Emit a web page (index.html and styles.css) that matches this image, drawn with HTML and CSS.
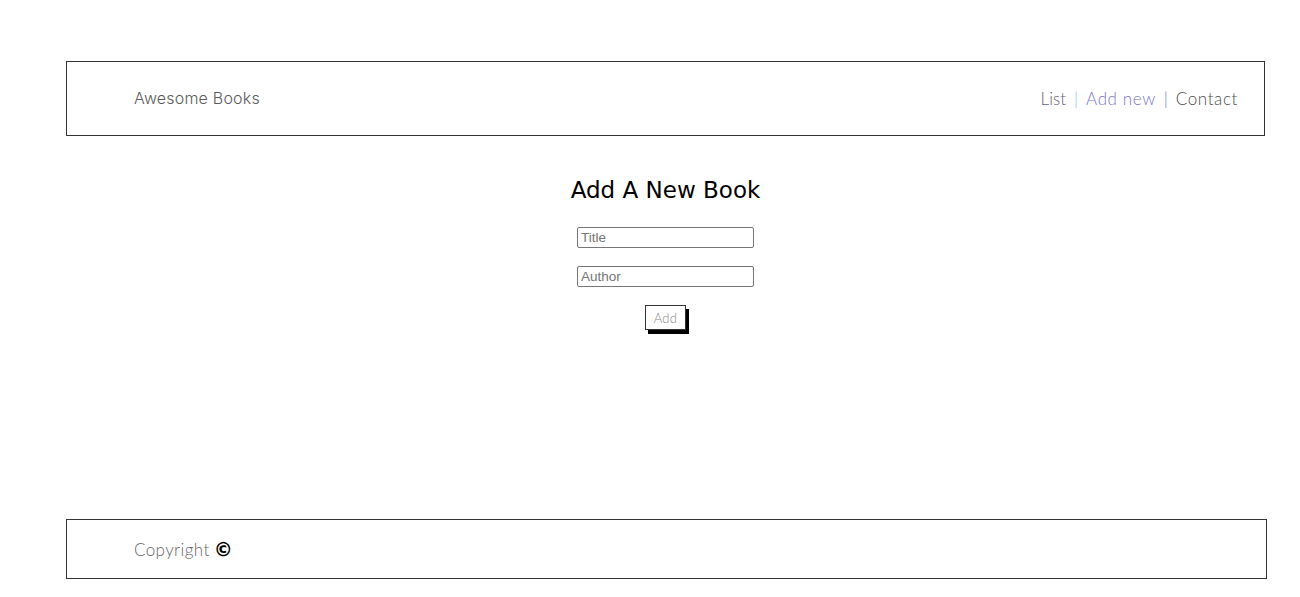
FILE: index.html
```html
<!DOCTYPE html>
<html lang="en">
<head>
<meta charset="utf-8">
<title>Awesome Books</title>
<link rel="stylesheet" href="styles.css">
</head>
<body>
<div class="page">
  <header class="header">
    <span class="brand">Awesome Books</span>
    <nav class="nav">
      <a class="nav-link list" href="#">List</a>
      <span class="sep sep-blue">|</span>
      <a class="nav-link add" href="#">Add new</a>
      <span class="sep sep-purple">|</span>
      <a class="nav-link contact" href="#">Contact</a>
    </nav>
  </header>
  <main class="main">
    <h1 class="title">Add A New Book</h1>
    <form class="form">
      <input class="field" type="text" placeholder="Title">
      <input class="field" type="text" placeholder="Author">
      <button class="add-btn" type="button">Add</button>
    </form>
  </main>
  <footer class="footer">
    <span class="copy">Copyright</span><span class="copy-sign">©</span>
  </footer>
</div>
</body>
</html>
```
FILE: styles.css
```css
html, body {
  margin: 0;
  padding: 0;
  background: #fff;
}

.page {
  padding: 61px 0 0 66px;
  width: 1202px;
  display: flex;
  flex-direction: column;
}

.header {
  box-sizing: border-box;
  width: 1199px;
  height: 75px;
  border: 1px solid #333;
  display: flex;
  align-items: center;
  justify-content: space-between;
  padding: 0 26px 0 67px;
}

.brand {
  font-family: "Inter", "Liberation Sans", sans-serif;
  font-weight: 300;
  font-size: 16px;
  letter-spacing: 0.2px;
  color: #5a5a5a;
  position: relative;
  top: -1px;
}

.nav {
  display: flex;
  align-items: center;
  gap: 8px;
  font-family: "Lato", "Liberation Sans", sans-serif;
  font-weight: 300;
  font-size: 17px;
  letter-spacing: 0.6px;
}

.nav-link {
  text-decoration: none;
}

.list { color: #66607a; letter-spacing: 0; }
.add { color: #7d74c9; }
.contact { color: #4d4d4d; }

.sep {
  font-weight: 300;
  letter-spacing: 0;
}
.sep-blue { color: #8fb8ea; }
.sep-purple { color: #7a70c4; }

.main {
  height: 383px;
  display: flex;
  flex-direction: column;
  align-items: center;
  width: 1199px;
}

.title {
  margin: 38px 0 0;
  font-family: "DejaVu Sans", sans-serif;
  font-weight: 400;
  font-size: 23px;
  color: #000;
  line-height: 32px;
}

.form {
  display: flex;
  flex-direction: column;
  align-items: center;
  margin-top: 21px;
  gap: 18px;
}

.field {
  box-sizing: border-box;
  width: 177px;
  height: 21px;
  margin: 0;
  border: 1px solid #767676;
  border-radius: 2px;
  padding: 1px 3px;
  font-family: "Liberation Sans", Arial, sans-serif;
  font-size: 13.5px;
  color: #333;
}

.field::placeholder {
  color: #757575;
}

.add-btn {
  box-sizing: border-box;
  width: 41px;
  height: 25px;
  margin: 0;
  padding: 0;
  background: #fff;
  border: 1px solid #333;
  box-shadow: 3px 4px 0 #000;
  font-family: "Lato", sans-serif;
  font-weight: 300;
  font-size: 13px;
  letter-spacing: 0.3px;
  color: #888;
}

.footer {
  box-sizing: border-box;
  width: 1201px;
  height: 60px;
  border: 1px solid #333;
  display: flex;
  align-items: center;
  padding-left: 67px;
}

.copy {
  font-family: "Lato", "Liberation Sans", sans-serif;
  font-weight: 300;
  font-size: 17px;
  letter-spacing: 0.4px;
  color: #666;
  margin-right: 4px;
}

.copy-sign {
  font-family: "DejaVu Sans", sans-serif;
  font-weight: 700;
  font-size: 19px;
  color: #000;
}
```
